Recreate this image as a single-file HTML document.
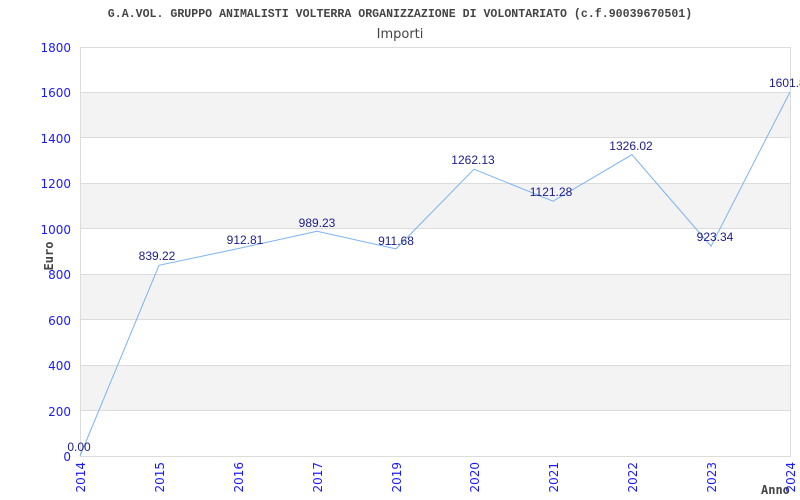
<!DOCTYPE html>
<html><head><meta charset="utf-8"><style>
html,body{margin:0;padding:0;background:#fff;width:800px;height:500px;overflow:hidden}
</style></head><body>
<svg width="800" height="500" xmlns="http://www.w3.org/2000/svg">
<rect width="800" height="500" fill="#fff"/>
<g fill="#f3f3f3">
<rect x="80" y="92" width="710" height="45.4"/>
<rect x="80" y="183" width="710" height="45.4"/>
<rect x="80" y="274" width="710" height="45.4"/>
<rect x="80" y="365" width="710" height="45.4"/>
</g>
<g stroke="#dcdcdc" stroke-width="1">
<line x1="80" y1="92.5" x2="790" y2="92.5"/>
<line x1="80" y1="137.5" x2="790" y2="137.5"/>
<line x1="80" y1="183.5" x2="790" y2="183.5"/>
<line x1="80" y1="228.5" x2="790" y2="228.5"/>
<line x1="80" y1="274.5" x2="790" y2="274.5"/>
<line x1="80" y1="319.5" x2="790" y2="319.5"/>
<line x1="80" y1="365.5" x2="790" y2="365.5"/>
<line x1="80" y1="410.5" x2="790" y2="410.5"/>
<rect x="80.5" y="47.5" width="710" height="409" fill="none"/>
</g>
<polyline fill="none" stroke="#7ab4f5" stroke-width="1" points="80,456 159,265.3 238,248.6 317,231.2 396,248.9 474,169.2 553,201.2 632,154.7 711,246.2 790,92"/>
<g font-family="Liberation Mono, DejaVu Sans Mono, monospace" font-weight="bold" font-size="11.6" fill="#444">
<text x="400" y="17" text-anchor="middle">G.A.VOL. GRUPPO ANIMALISTI VOLTERRA ORGANIZZAZIONE DI VOLONTARIATO (c.f.90039670501)</text>
</g>
<text x="400" y="38" text-anchor="middle" font-family="DejaVu Sans, sans-serif" font-size="13" fill="#444">Importi</text>
<g font-family="DejaVu Sans, sans-serif" font-size="12" fill="#1a1aff" text-anchor="end">
<text x="71" y="52">1800</text>
<text x="71" y="97">1600</text>
<text x="71" y="143">1400</text>
<text x="71" y="188">1200</text>
<text x="71" y="234">1000</text>
<text x="71" y="279">800</text>
<text x="71" y="325">600</text>
<text x="71" y="370">400</text>
<text x="71" y="416">200</text>
<text x="71" y="461">0</text>
</g>
<g font-family="DejaVu Sans, sans-serif" font-size="12" fill="#1a1aff" text-anchor="end">
<text transform="translate(85,462) rotate(-90)">2014</text>
<text transform="translate(164,462) rotate(-90)">2015</text>
<text transform="translate(243,462) rotate(-90)">2016</text>
<text transform="translate(322,462) rotate(-90)">2017</text>
<text transform="translate(401,462) rotate(-90)">2019</text>
<text transform="translate(479,462) rotate(-90)">2020</text>
<text transform="translate(558,462) rotate(-90)">2021</text>
<text transform="translate(637,462) rotate(-90)">2022</text>
<text transform="translate(716,462) rotate(-90)">2023</text>
<text transform="translate(795,462) rotate(-90)">2024</text>
</g>
<text transform="translate(53,256) rotate(-90)" text-anchor="middle" font-family="DejaVu Sans Mono, monospace" font-weight="bold" font-size="12" fill="#444">Euro</text>
<text x="761" y="494" font-family="DejaVu Sans Mono, monospace" font-weight="bold" font-size="12" fill="#444">Anno</text>
<g font-family="Liberation Sans, sans-serif" font-size="12" fill="#1c1c8c" text-anchor="middle">
<text x="79" y="451">0.00</text>
<text x="157" y="260">839.22</text>
<text x="245" y="244">912.81</text>
<text x="317" y="227">989.23</text>
<text x="396" y="245">911.68</text>
<text x="473" y="164">1262.13</text>
<text x="551" y="196">1121.28</text>
<text x="631" y="150">1326.02</text>
<text x="715" y="241">923.34</text>
<text x="790" y="87" text-anchor="start" dx="-21">1601.8</text>
</g>
</svg>
</body></html>
